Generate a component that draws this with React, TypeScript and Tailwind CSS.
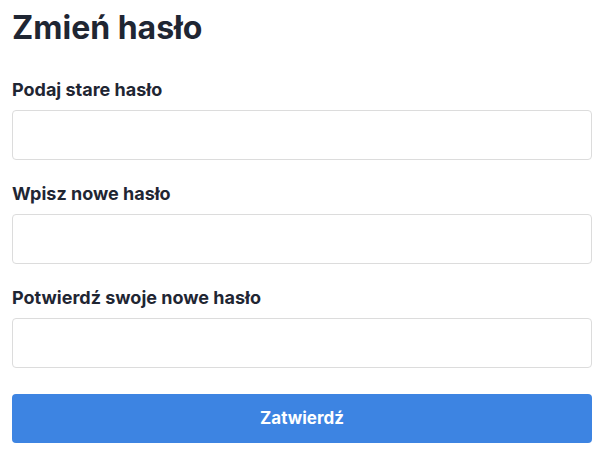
import React from "react";

const fields = ["Podaj stare hasło", "Wpisz nowe hasło", "Potwierdź swoje nowe hasło"];

export default function App() {
  return (
    <div className="w-[604px] h-[455px] bg-white px-3 pt-[8px] font-['Inter',_'Liberation_Sans',_sans-serif] text-[#1f2633]">
      <h1 className="text-[32px] font-bold leading-[40px] mb-[32px]">Zmień hasło</h1>
      <form className="flex flex-col" onSubmit={(e) => e.preventDefault()}>
        {fields.map((label) => (
          <div key={label} className="flex flex-col mb-[24px]">
            <label className="text-[18px] font-bold leading-[20px] mb-[10px]">{label}</label>
            <input
              type="password"
              className="h-[50px] w-full rounded-[4px] border border-[#dcdcdc] bg-white px-3 outline-none"
            />
          </div>
        ))}
        <button
          type="submit"
          className="mt-[2px] h-[49px] w-full rounded-[4px] bg-[#3d84e2] text-[17px] font-bold text-white"
        >
          Zatwierdź
        </button>
      </form>
    </div>
  );
}
